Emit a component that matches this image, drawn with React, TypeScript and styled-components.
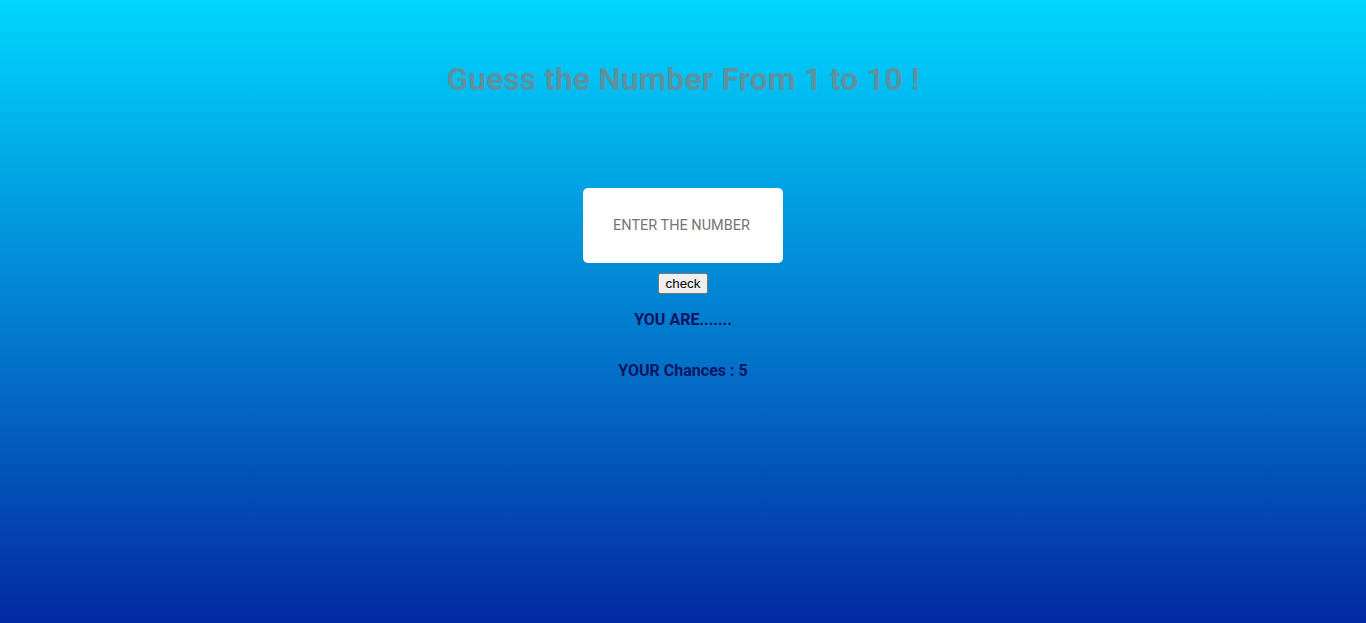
import React from "react";
import styled, { createGlobalStyle } from "styled-components";

const Global = createGlobalStyle`
  html, body { margin: 0; padding: 0; height: 100%; }
  body {
    font-family: Roboto, "Liberation Sans", sans-serif;
    background: linear-gradient(to bottom, #00d6ff 0%, #0429a2 100%);
    background-attachment: fixed;
    min-height: 100vh;
  }
`;

const Page = styled.main`
  min-height: 100vh;
  display: flex;
  flex-direction: column;
  align-items: center;
  padding-top: 60px;
  box-sizing: border-box;
`;

const Title = styled.h1`
  margin: 0;
  font-size: 32px;
  font-weight: 700;
  color: rgba(128, 128, 128, 0.72);
`;

const Input = styled.input`
  margin-top: 90px;
  width: 200px;
  height: 75px;
  box-sizing: border-box;
  border: none;
  border-radius: 5px;
  background: #fff;
  padding: 0 30px 1px;
  font-family: Roboto, sans-serif;
  font-size: 14.5px;
  outline: none;
  &::placeholder { color: #757575; }
`;

const Button = styled.button`
  margin-top: 10px;
`;

const Status = styled.p<{ $gap: number }>`
  margin: ${(p) => p.$gap}px 0 0;
  font-size: 16px;
  font-weight: 700;
  color: #0b1660;
`;

export default function App() {
  return (
    <>
      <Global />
      <Page>
        <Title>Guess the Number From 1 to 10 !</Title>
        <Input type="text" placeholder="ENTER THE NUMBER" />
        <Button>check</Button>
        <Status $gap={16}>YOU ARE.......</Status>
        <Status $gap={32}>YOUR Chances : 5</Status>
      </Page>
    </>
  );
}
